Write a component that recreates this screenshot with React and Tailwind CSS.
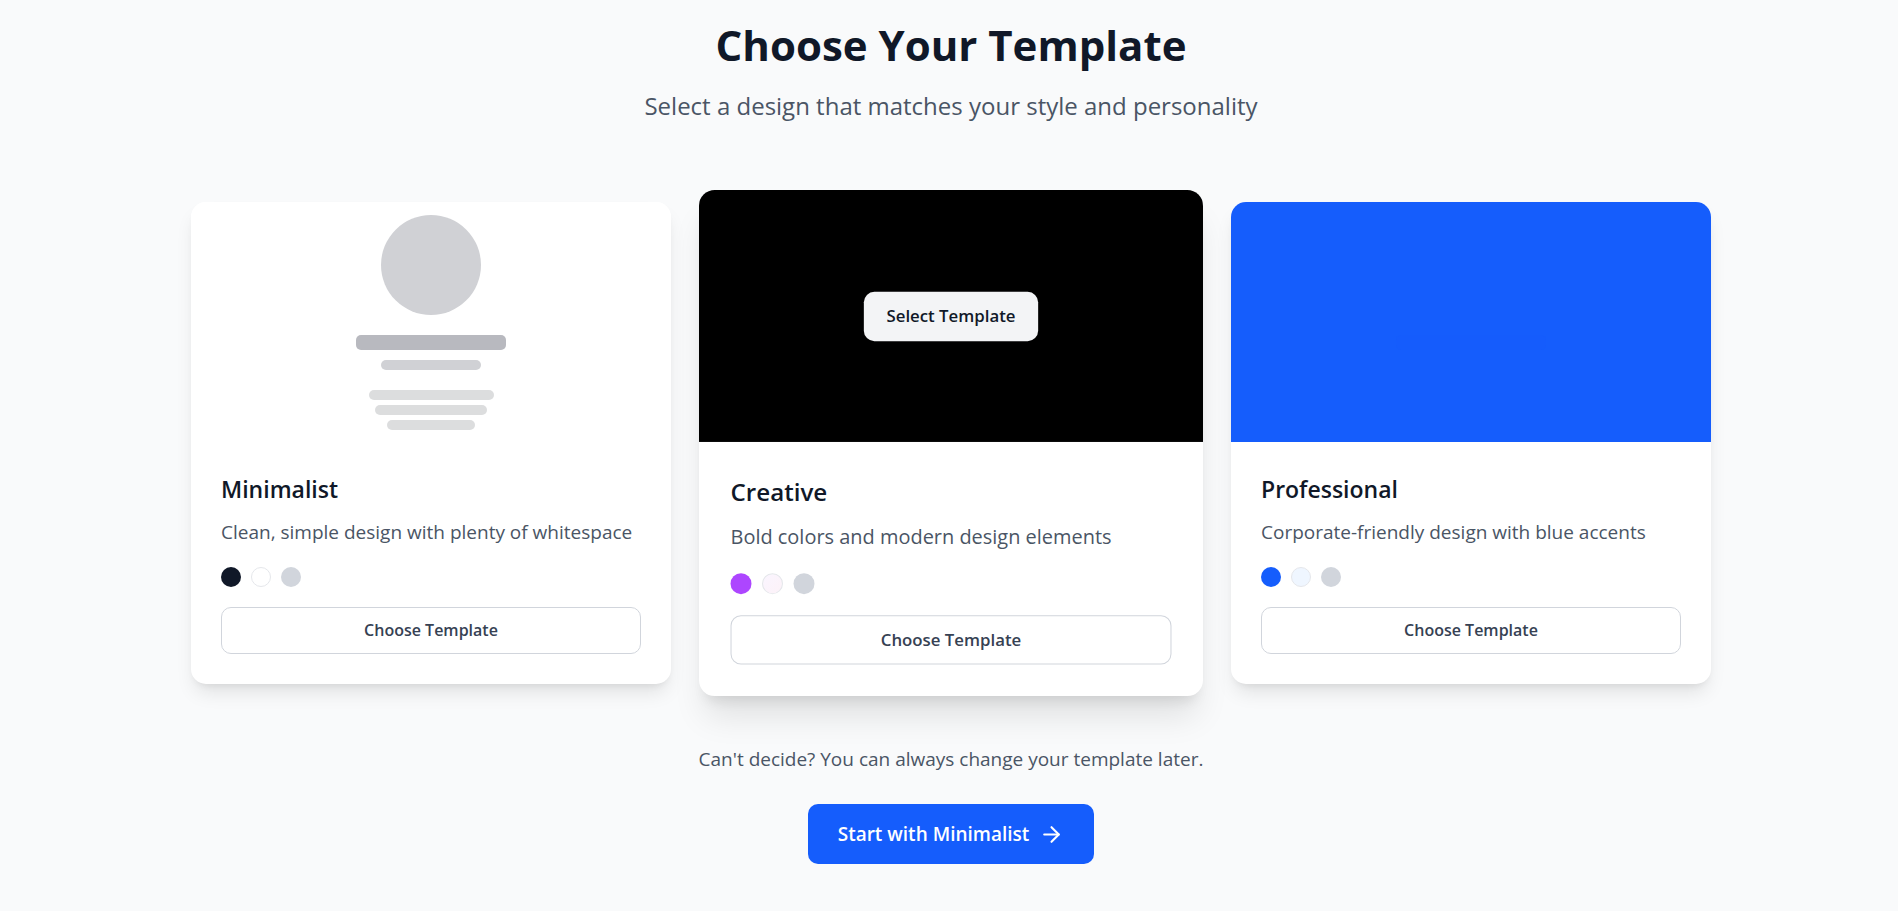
import { ArrowRight } from "lucide-react";

const templates = [
  {
    name: "Minimalist",
    description: "Clean, simple design with plenty of whitespace",
    swatches: ["bg-gray-900", "border border-gray-200 bg-white", "bg-gray-300"],
    preview: "bg-white",
    card: "shadow-[0_12px_19px_-4px_rgb(0_0_0/0.1),0_5px_8px_-5px_rgb(0_0_0/0.1)]",
  },
  {
    name: "Creative",
    description: "Bold colors and modern design elements",
    swatches: [
      "bg-purple-500",
      "border border-gray-200 bg-linear-to-br from-purple-50 to-pink-50",
      "bg-gray-300",
    ],
    preview: "bg-black",
    card: "relative z-10 scale-105 shadow-[0_25px_31px_-6px_rgb(0_0_0/0.1),0_10px_12px_-7px_rgb(0_0_0/0.1)]",
  },
  {
    name: "Professional",
    description: "Corporate-friendly design with blue accents",
    swatches: ["bg-blue-600", "border border-gray-200 bg-blue-50", "bg-gray-300"],
    preview: "bg-blue-600",
    card: "shadow-[0_12px_19px_-4px_rgb(0_0_0/0.1),0_5px_8px_-5px_rgb(0_0_0/0.1)]",
  },
];

function ProfileSketch() {
  return (
    <div className="flex flex-col items-center">
      <div className="mb-5 size-[100px] rounded-full bg-[#d0d1d5]" />
      <div className="mb-2.5 h-[15px] w-[150px] rounded-[5px] bg-[#b8b9bf]" />
      <div className="mb-5 h-2.5 w-[100px] rounded-[5px] bg-[#d0d1d5]" />
      <div className="flex w-[125px] flex-col items-center gap-[5px]">
        <div className="h-2.5 w-full rounded-[5px] bg-[#dcddde]" />
        <div className="h-2.5 w-9/10 rounded-[5px] bg-[#dcddde]" />
        <div className="h-2.5 w-7/10 rounded-[5px] bg-[#dcddde]" />
      </div>
    </div>
  );
}

function Preview({ template }) {
  return (
    <div className={`flex h-60 items-center justify-center ${template.preview}`}>
      {template.name === "Minimalist" && <ProfileSketch />}
      {template.name === "Creative" && (
        <button
          type="button"
          className="rounded-[10px] bg-gray-100 px-[22px] py-[11px] text-[16px] leading-[25px] font-semibold text-gray-900"
        >
          Select Template
        </button>
      )}
      {template.name === "Professional" && (
        <div className="mt-10 h-[15px] w-[150px] rounded-[5px] bg-[#155cfc]" />
      )}
    </div>
  );
}

function TemplateCard({ template }) {
  return (
    <article className={`overflow-hidden rounded-[15px] bg-white ${template.card}`}>
      <Preview template={template} />
      <div className="p-[30px]">
        <h2 className="mb-2.5 text-[23px] leading-[35px] font-semibold text-gray-900">
          {template.name}
        </h2>
        <p className="mb-5 text-[19px] leading-[30px] text-gray-600">{template.description}</p>
        <div className="mb-5 flex gap-2.5">
          {template.swatches.map((swatch) => (
            <span key={swatch} className={`size-5 rounded-full ${swatch}`} />
          ))}
        </div>
        <button
          type="button"
          className="block w-full rounded-[10px] border border-gray-300 py-2.5 text-[16px] leading-[25px] font-semibold text-gray-700"
        >
          Choose Template
        </button>
      </div>
    </article>
  );
}

export default function App() {
  return (
    <main className="min-h-screen bg-gray-50 pt-5 pb-10 pl-1 font-['Open_Sans','Noto_Sans',sans-serif]">
      <div className="mx-auto max-w-[1520px]">
        <header className="mb-[79px] text-center">
          <h1 className="mb-[18px] text-[42px] leading-[50px] font-bold text-gray-900">
            Choose Your Template
          </h1>
          <p className="text-[24px] leading-[35px] text-gray-600">
            Select a design that matches your style and personality
          </p>
        </header>
        <section className="grid grid-cols-3 gap-10">
          {templates.map((template) => (
            <TemplateCard key={template.name} template={template} />
          ))}
        </section>
        <footer className="mt-[60px] flex flex-col items-center">
          <p className="mb-[30px] text-[19px] leading-[30px] text-gray-600">
            Can't decide? You can always change your template later.
          </p>
          <button
            type="button"
            className="flex items-center gap-2.5 rounded-[10px] bg-blue-600 px-[30px] py-[15px] text-[19px] leading-[30px] font-semibold text-white"
          >
            Start with Minimalist
            <ArrowRight size={25} aria-hidden="true" />
          </button>
        </footer>
      </div>
    </main>
  );
}
